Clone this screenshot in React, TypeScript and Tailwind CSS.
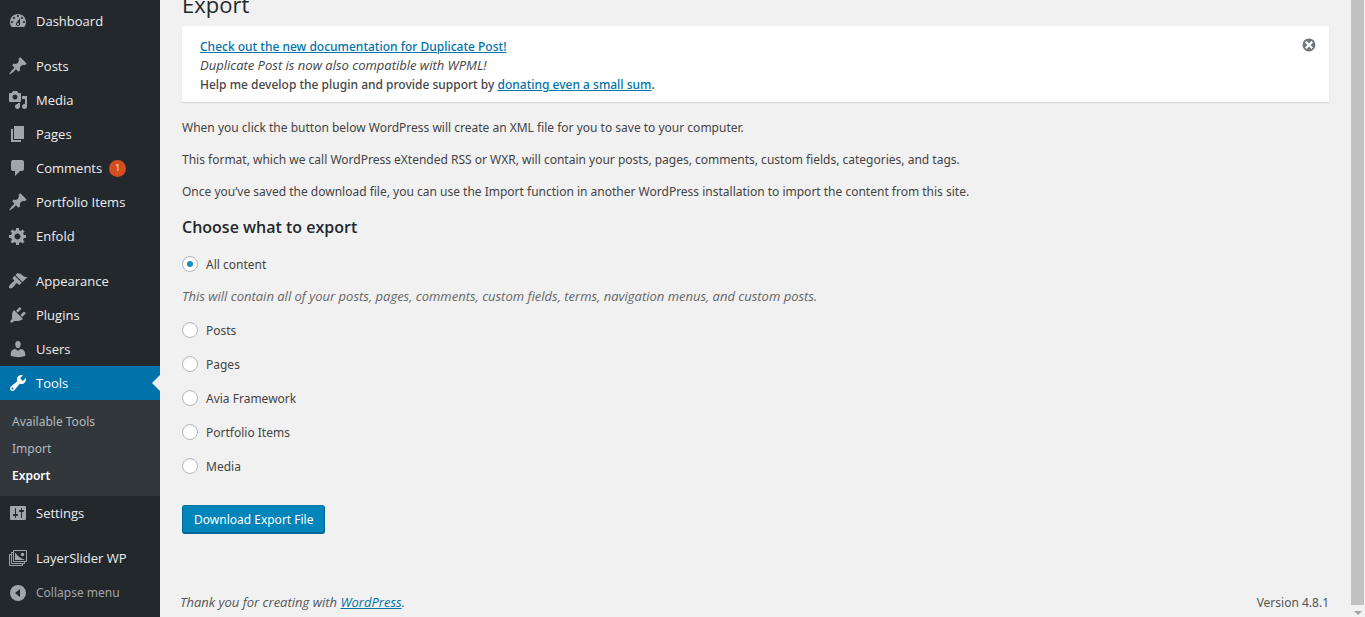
import { useState } from 'react'
import type { ReactNode } from 'react'

interface MenuItem {
  label: string
  icon: ReactNode
  count?: number
  children?: string[]
}

const dash = (d: string) => (
  <svg viewBox="0 0 20 20" className="size-5" fill="currentColor" fillRule="evenodd" aria-hidden="true">
    <path d={d} />
  </svg>
)

const pin = dash(
  'M10.44 3.02l1.82-1.82 6.36 6.35-1.83 1.82c-1.05-.68-2.48-.57-3.41.36l-.75.75c-.92.93-1.04 2.35-.35 3.41l-1.83 1.82-2.41-2.41-2.8 2.79c-.42.42-3.38 2.71-3.8 2.29s1.86-3.39 2.28-3.81l2.79-2.79L4.1 9.36l1.83-1.82c1.05.69 2.48.57 3.4-.36l.75-.75c.93-.92 1.05-2.35.36-3.41z'
)

const layers = (
  <svg viewBox="0 0 20 20" className="size-5" fill="none" stroke="currentColor" aria-hidden="true">
    <path d="M3.5 6.5H1.5V17.5H14.5V16" />
    <path d="M5.5 4.5H3.5V15.5H16.5V14" />
    <path d="M5.5 2.5H18.5V13.5H5.5z" />
    <path d="M7 12V4.5L10 8l2 1.5 5 2.5z" fill="currentColor" stroke="none" />
    <circle cx="14.5" cy="6.5" r="1.7" fill="currentColor" stroke="none" />
  </svg>
)

const menuGroups: MenuItem[][] = [
  [
    {
      label: 'Dashboard',
      icon: dash(
        'M3.76 16h12.48c1.1-1.37 1.76-3.11 1.76-5 0-4.42-3.58-8-8-8s-8 3.58-8 8c0 1.89.66 3.63 1.76 5zM10 4c.55 0 1 .45 1 1s-.45 1-1 1-1-.45-1-1 .45-1 1-1zM6 6c.55 0 1 .45 1 1s-.45 1-1 1-1-.45-1-1 .45-1 1-1zm8 0c.55 0 1 .45 1 1s-.45 1-1 1-1-.45-1-1 .45-1 1-1zm-5.37 5.55L12 7v6c0 1.1-.9 2-2 2s-2-.9-2-2c0-.57.24-1.08.63-1.45zM4 10c.55 0 1 .45 1 1s-.45 1-1 1-1-.45-1-1 .45-1 1-1zm12 0c.55 0 1 .45 1 1s-.45 1-1 1-1-.45-1-1 .45-1 1-1zm-5 3c0-.55-.45-1-1-1s-1 .45-1 1 .45 1 1 1 1-.45 1-1z'
      ),
    },
  ],
  [
    { label: 'Posts', icon: pin },
    {
      label: 'Media',
      icon: dash(
        'M13 11V4c0-.55-.45-1-1-1h-1.67L9 1H5L3.67 3H2c-.55 0-1 .45-1 1v7c0 .55.45 1 1 1h10c.55 0 1-.45 1-1zM7 4.5c1.38 0 2.5 1.12 2.5 2.5S8.38 9.5 7 9.5 4.5 8.38 4.5 7 5.62 4.5 7 4.5zM14 6h5v10.5c0 1.38-1.12 2.5-2.5 2.5S14 17.88 14 16.5s1.12-2.5 2.5-2.5c.17 0 .34.02.5.05V9h-3V6zm-4 8.05V13h2v3.5c0 1.38-1.12 2.5-2.5 2.5S7 17.88 7 16.5 8.12 14 9.5 14c.17 0 .34.02.5.05z'
      ),
    },
    { label: 'Pages', icon: dash('M6 15V2h10v13H6zm-1 1h8v2H3V5h2v11z') },
    {
      label: 'Comments',
      icon: dash('M5 2h9c1.1 0 2 .9 2 2v7c0 1.1-.9 2-2 2h-2l-5 5v-5H5c-1.1 0-2-.9-2-2V4c0-1.1.9-2 2-2z'),
      count: 1,
    },
    { label: 'Portfolio Items', icon: pin },
    {
      label: 'Enfold',
      icon: dash(
        'M18 12h-2.18c-.17.7-.44 1.35-.81 1.93l1.54 1.54-2.1 2.1-1.54-1.54c-.58.36-1.23.63-1.91.79V19H8v-2.18c-.68-.16-1.33-.43-1.91-.79l-1.54 1.54-2.12-2.12 1.54-1.54c-.36-.58-.63-1.23-.79-1.91H1V9.03h2.17c.16-.7.44-1.35.8-1.94L2.43 5.55l2.1-2.1 1.54 1.54c.58-.37 1.24-.64 1.93-.81V2h3v2.18c.68.16 1.33.43 1.91.79l1.54-1.54 2.12 2.12-1.54 1.54c.36.59.64 1.24.8 1.94H18V12zm-8.5 1.5c1.66 0 3-1.34 3-3s-1.34-3-3-3-3 1.34-3 3 1.34 3 3 3z'
      ),
    },
  ],
  [
    {
      label: 'Appearance',
      icon: dash(
        'M14.48 11.06L7.41 3.99l1.5-1.5c.5-.56 2.3-.47 3.51.32 1.21.8 1.43 1.28 2.91 2.1 1.18.64 2.45 1.26 4.45.85zm-.71.71L6.7 4.7 4.93 6.47c-.39.39-.39 1.02 0 1.41l1.06 1.06c.39.39.39 1.03 0 1.42-.6.6-1.43 1.11-2.21 1.69-.35.26-.7.53-1.01.84C1.43 14.23.4 16.08 1.4 17.07c.99 1 2.84-.03 4.18-1.36.31-.31.58-.66.85-1.02.57-.78 1.08-1.61 1.69-2.21.39-.39 1.02-.39 1.41 0l1.06 1.06c.39.39 1.02.39 1.41 0z'
      ),
    },
    {
      label: 'Plugins',
      icon: dash(
        'M13.11 4.36L9.87 7.6 8 5.73l3.24-3.24c.35-.34 1.05-.2 1.56.32.52.51.66 1.21.31 1.55zm-8 1.77l.91-1.12 9.01 9.01-1.19.84c-.71.71-2.63 1.16-3.82 1.16H6.14L4.9 17.26c-.59.59-1.54.59-2.12 0-.59-.58-.59-1.53 0-2.12l1.24-1.24v-3.88c0-1.13.4-3.19 1.09-3.89zm7.26 3.97l3.24-3.24c.34-.35 1.04-.21 1.55.31.52.51.66 1.21.31 1.55l-3.24 3.25z'
      ),
    },
    {
      label: 'Users',
      icon: dash(
        'M10 9.25c-2.27 0-2.73-3.44-2.73-3.44C7 4.02 7.82 2 9.97 2c2.16 0 2.98 2.02 2.71 3.81 0 0-.41 3.44-2.68 3.44zm0 2.57L12.72 10c2.39 0 4.52 2.33 4.52 4.53v2.49s-3.65 1.13-7.24 1.13c-3.65 0-7.24-1.13-7.24-1.13v-2.49c0-2.25 1.94-4.48 4.47-4.48z'
      ),
    },
    {
      label: 'Tools',
      icon: dash(
        'M16.68 9.77c-1.34 1.34-3.3 1.67-4.95.99l-5.41 6.52c-.99.99-2.59.99-3.58 0s-.99-2.59 0-3.57l6.52-5.42c-.68-1.65-.35-3.61.99-4.95 1.28-1.28 3.12-1.62 4.72-1.06l-2.89 2.89 2.82 2.82 2.86-2.87c.53 1.58.18 3.39-1.08 4.65zM3.81 16.21c.4.39 1.04.39 1.43 0 .4-.4.4-1.04 0-1.43-.39-.4-1.03-.4-1.43 0-.39.39-.39 1.03 0 1.43z'
      ),
      children: ['Available Tools', 'Import', 'Export'],
    },
    {
      label: 'Settings',
      icon: dash(
        'M18 16V4c0-.55-.45-1-1-1H3c-.55 0-1 .45-1 1v12c0 .55.45 1 1 1h14c.55 0 1-.45 1-1zM8 11h1c.55 0 1 .45 1 1s-.45 1-1 1H8v1.5c0 .28-.22.5-.5.5s-.5-.22-.5-.5V13H6c-.55 0-1-.45-1-1s.45-1 1-1h1V5.5c0-.28.22-.5.5-.5s.5.22.5.5V11zm5-2h-1c-.55 0-1-.45-1-1s.45-1 1-1h1V5.5c0-.28.22-.5.5-.5s.5.22.5.5V7h1c.55 0 1 .45 1 1s-.45 1-1 1h-1v5.5c0 .28-.22.5-.5.5s-.5-.22-.5-.5V9z'
      ),
    },
  ],
  [{ label: 'LayerSlider WP', icon: layers }],
]

const collapseIcon = dash('M10 2a8 8 0 1 0 0 16 8 8 0 0 0 0-16zm2 4v8l-5-4z')
const dismissIcon =
  'M10 2c4.42 0 8 3.58 8 8s-3.58 8-8 8-8-3.58-8-8 3.58-8 8-8zm5 11l-3-3 3-3-2-2-3 3-3-3-2 2 3 3-3 3 2 2 3-3 3 3z'

const postTypes = ['Posts', 'Pages', 'Avia Framework', 'Portfolio Items', 'Media']

function Sidebar() {
  return (
    <nav className="w-40 shrink-0 bg-[#23282d] pt-1 font-['Open_Sans','Noto_Sans',sans-serif] text-[13px] leading-[18px] text-[#eee]">
      {menuGroups.map((group, i) => (
        <ul key={i} className="mb-[11px] last-of-type:mb-0">
          {group.map((item) => (
            <li key={item.label}>
              <a
                href="#"
                className={
                  item.children
                    ? 'relative flex h-[34px] items-center bg-[#0073aa] text-white'
                    : 'flex h-[34px] items-center hover:text-[#00b9eb]'
                }
              >
                <span className={item.children ? 'flex w-9 justify-center' : 'flex w-9 justify-center text-[#a0a5aa]'}>
                  {item.icon}
                </span>
                {item.label}
                {item.count && (
                  <span className="ml-[7px] flex size-[17px] items-center justify-center rounded-full bg-[#d54e21] text-[9px] text-white">
                    {item.count}
                  </span>
                )}
                {item.children && (
                  <span className="absolute top-[9px] right-0 border-y-8 border-r-8 border-y-transparent border-r-[#f1f1f1]" />
                )}
              </a>
              {item.children && (
                <ul className="bg-[#32373c] pt-2 pb-[7px] font-['Noto_Sans',sans-serif] text-[12px]">
                  {item.children.map((child) => (
                    <li key={child}>
                      <a
                        href="#"
                        className={
                          child === 'Export'
                            ? 'flex h-[27px] items-center px-3 font-semibold text-white'
                            : 'flex h-[27px] items-center px-3 text-[#b4b9be] hover:text-[#00b9eb]'
                        }
                      >
                        {child}
                      </a>
                    </li>
                  ))}
                </ul>
              )}
            </li>
          ))}
        </ul>
      ))}
      <button
        type="button"
        className="flex h-9 w-full items-center font-['Noto_Sans',sans-serif] text-[12px] text-[#a0a5aa]"
      >
        <span className="flex w-9 justify-center">{collapseIcon}</span>
        Collapse menu
      </button>
    </nav>
  )
}

function Notice({ onDismiss }: { onDismiss: () => void }) {
  return (
    <div className="flex items-start justify-between bg-white pt-[11px] pr-3 pb-2 pl-[18px] shadow-[0_1px_1px_rgba(0,0,0,0.1)]">
      <div className="font-medium">
        <p>
          <a href="#" className="text-[#0073aa] underline">
            Check out the new documentation for Duplicate Post!
          </a>
        </p>
        <p className="font-['Open_Sans',sans-serif] text-[13px] font-normal italic">
          Duplicate Post is now also compatible with WPML!
        </p>
        <p>
          Help me develop the plugin and provide support by{' '}
          <a href="#" className="text-[#0073aa] underline">
            donating even a small sum
          </a>
          .
        </p>
      </div>
      <button type="button" aria-label="Dismiss this notice" onClick={onDismiss} className="text-[#72777c]">
        <svg viewBox="0 0 20 20" className="size-4" fill="currentColor" aria-hidden="true">
          <path d={dismissIcon} />
        </svg>
      </button>
    </div>
  )
}

interface ContentRadioProps {
  label: string
  selected: string
  onSelect: (value: string) => void
}

function ContentRadio({ label, selected, onSelect }: ContentRadioProps) {
  return (
    <label className="flex h-[34px] w-fit items-center gap-2">
      <input
        type="radio"
        name="content"
        value={label}
        checked={selected === label}
        onChange={() => onSelect(label)}
        className="grid size-4 appearance-none place-items-center rounded-full border border-[#b4b9be] bg-white shadow-[inset_0_1px_2px_rgba(0,0,0,0.07)] before:size-1.5 before:rounded-full checked:before:bg-[#1e8cbe]"
      />
      {label}
    </label>
  )
}

export default function App() {
  const [content, setContent] = useState('All content')
  const [showNotice, setShowNotice] = useState(true)

  return (
    <div className="flex min-h-screen bg-[#f1f1f1] font-['Noto_Sans','Open_Sans',sans-serif] text-[12px] leading-[19px] text-[#444]">
      <Sidebar />

      <div className="flex min-w-0 flex-1 flex-col overflow-hidden pr-[22px] pl-5">
        <main className="pl-0.5">
          <h1 className="-mt-3 mb-1.5 font-['Open_Sans',sans-serif] text-[22px] leading-8 text-[#23282d]">Export</h1>
          {showNotice && <Notice onDismiss={() => setShowNotice(false)} />}

          <div className="mt-4 space-y-[13px]">
            <p>When you click the button below WordPress will create an XML file for you to save to your computer.</p>
            <p>
              This format, which we call WordPress eXtended RSS or WXR, will contain your posts, pages, comments, custom
              fields, categories, and tags.
            </p>
            <p>
              Once you’ve saved the download file, you can use the Import function in another WordPress installation to
              import the content from this site.
            </p>
          </div>

          <h2 className="mt-3.5 font-['Open_Sans',sans-serif] text-[16px] leading-6 font-semibold text-[#23282d]">
            Choose what to export
          </h2>
          <form onSubmit={(e) => e.preventDefault()}>
            <fieldset className="mt-2" aria-label="Content to export">
              <ContentRadio label="All content" selected={content} onSelect={setContent} />
              <p className="mt-1.5 mb-[7px] font-['Open_Sans',sans-serif] text-[13px] text-[#666] italic">
                This will contain all of your posts, pages, comments, custom fields, terms, navigation menus, and custom
                posts.
              </p>
              {postTypes.map((type) => (
                <ContentRadio key={type} label={type} selected={content} onSelect={setContent} />
              ))}
            </fieldset>
            <button
              type="submit"
              className="mt-[22px] h-[29px] rounded-[3px] border border-[#006799] border-t-[#0073aa] bg-[#0085ba] px-[11px] text-white shadow-[inset_0_-1px_0_#006799]"
            >
              Download Export File
            </button>
          </form>
        </main>

        <footer className="mt-auto flex justify-between pb-[5px] text-[#555]">
          <p className="font-['Open_Sans',sans-serif] text-[13px] italic">
            Thank you for creating with{' '}
            <a href="#" className="text-[#0073aa] underline">
              WordPress
            </a>
            .
          </p>
          <p>Version 4.8.1</p>
        </footer>
      </div>

      <div className="flex w-3.5 shrink-0 flex-col bg-[#f1f1f1]" aria-hidden="true">
        <div className="w-[13px] flex-1 bg-[#c1c1c1]" />
        <div className="flex h-3 w-[13px] items-center justify-center pt-1">
          <span className="border-x-4 border-t-4 border-x-transparent border-t-[#a3a3a3]" />
        </div>
      </div>
    </div>
  )
}
